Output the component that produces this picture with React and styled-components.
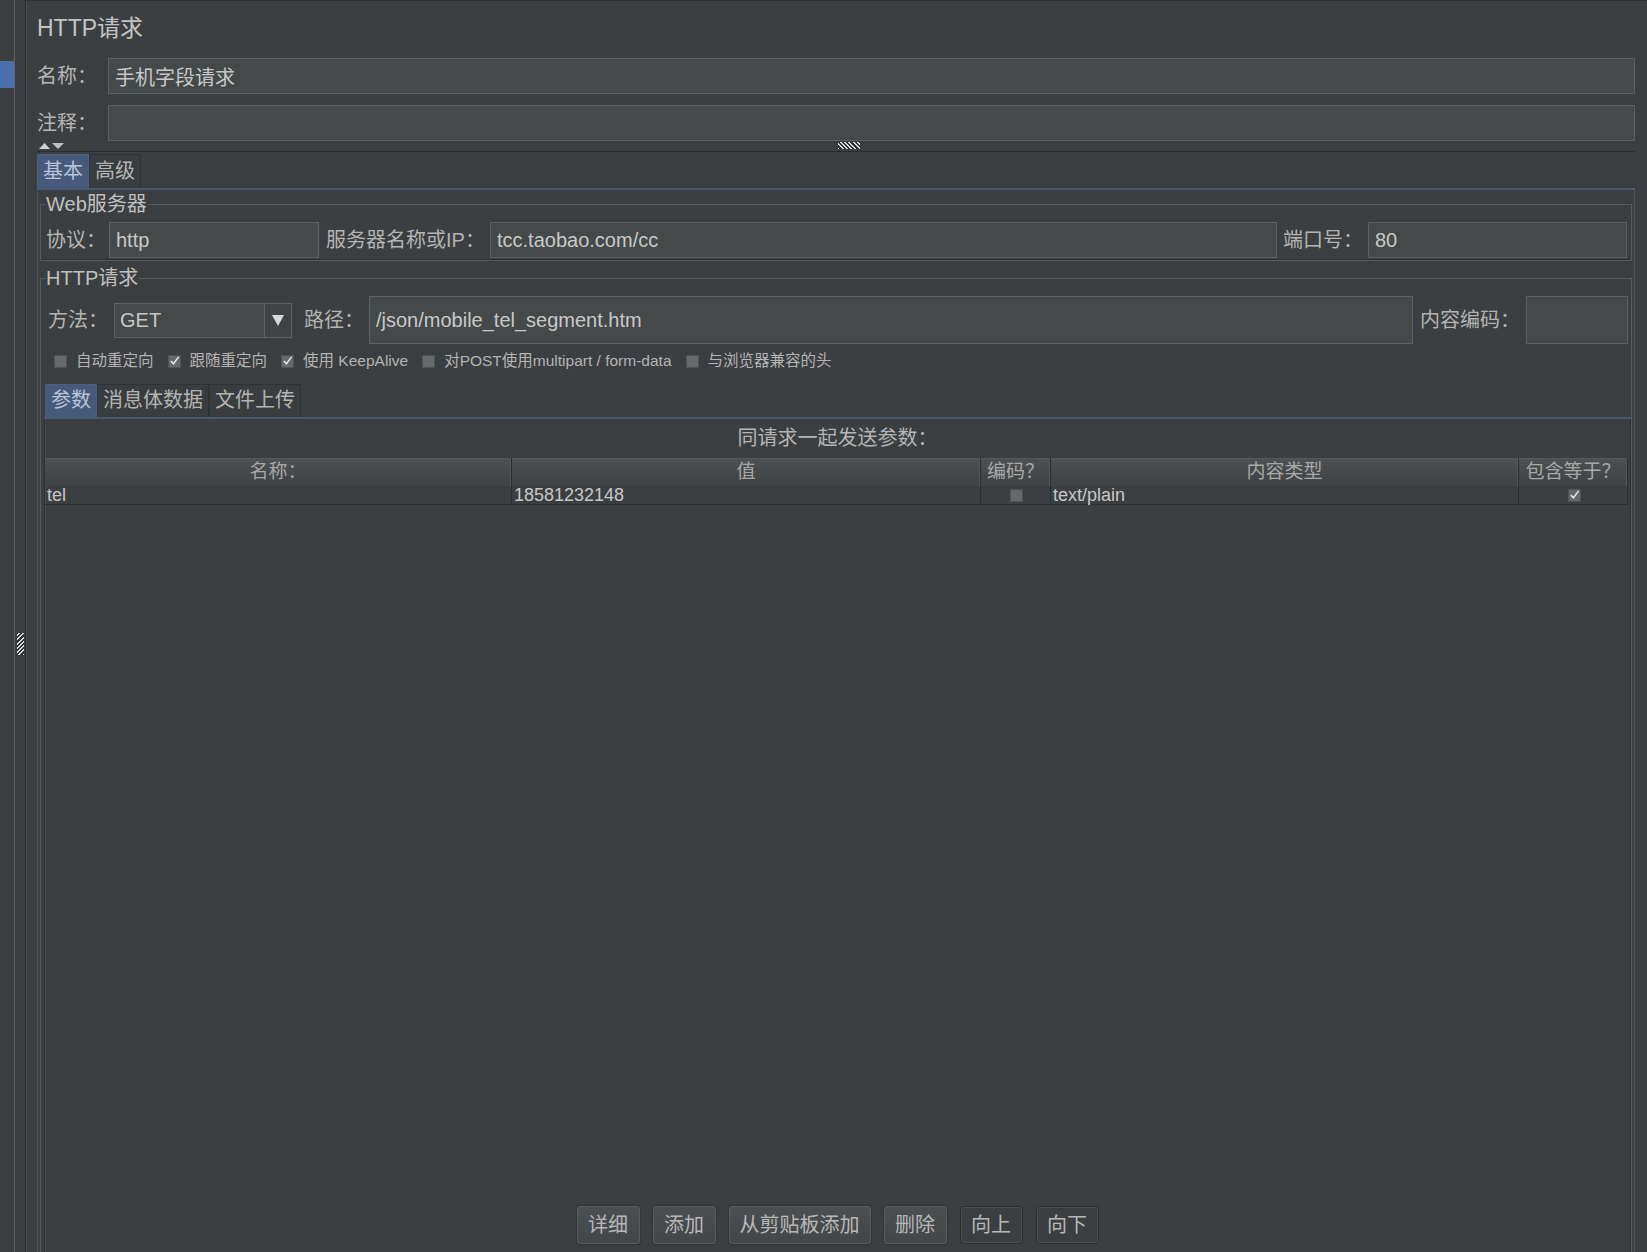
import React from "react";
import styled, { createGlobalStyle } from "styled-components";

const Global = createGlobalStyle`
  html, body { margin: 0; padding: 0; background: #3c3f41; }
  body {
    font-family: "Liberation Sans", "Noto Sans CJK SC", sans-serif;
    color: #bbbbbb;
  }
  * { box-sizing: border-box; }
`;

const Root = styled.div`
  display: flex;
  width: 1647px;
  height: 1252px;
  overflow: hidden;
  background: #3c3f41;
`;

const TreePane = styled.div`
  width: 15px;
  flex: none;
  padding-top: 61px;
  border-right: 1px solid #5e6264;
`;

const TreeSelection = styled.div`
  height: 27px;
  background: #4b6eaf;
`;

const SideSplitter = styled.div`
  width: 11px;
  flex: none;
  display: flex;
  justify-content: center;
  padding-top: 633px;
  border-right: 1px solid #2b2d2e;
`;

const Grip = styled.div`
  flex: none;
  width: ${(p) => p.$w}px;
  height: ${(p) => p.$h}px;
  margin-left: ${(p) => p.$ml || 0}px;
  background: repeating-linear-gradient(
    ${(p) => p.$angle || 45}deg,
    #d8d8d8 0 1.4px,
    #2e3032 1.4px 3px
  );
`;

const Main = styled.div`
  flex: 1;
  display: flex;
  flex-direction: column;
  min-width: 0;
  padding: 0 12px 0 11px;
  border-top: 1px solid #2f3133;
  box-shadow: inset 3px 0 0 -2px #4a4d4f;
`;

const Title = styled.div`
  font-size: 23px;
  line-height: 26px;
  padding-top: 14px;
  color: #c4c4c4;
`;

const FieldRow = styled.div`
  display: flex;
  align-items: center;
  margin-top: ${(p) => p.$mt}px;
`;

const FieldLabel = styled.div`
  flex: none;
  width: ${(p) => p.$w}px;
  margin-left: ${(p) => p.$ml || 0}px;
  font-size: 20px;
  line-height: 24px;
  white-space: nowrap;
  color: #b4b4b4;
`;

const TextInput = styled.input`
  flex: ${(p) => (p.$w ? "none" : "1")};
  width: ${(p) => (p.$w ? `${p.$w}px` : "auto")};
  min-width: 0;
  height: ${(p) => p.$h || 36}px;
  margin: 0;
  padding: 0 6px;
  background: #45494a;
  border: 1px solid #5e6163;
  border-radius: 0;
  color: #c8c8c8;
  font: 20px "Liberation Sans", "Noto Sans CJK SC", sans-serif;
  outline: none;
`;

const SplitBar = styled.div`
  display: flex;
  align-items: flex-start;
  height: 11px;
  padding-top: 1px;
  border-bottom: 1px solid #2a2c2e;
`;

const Arrows = styled.svg`
  flex: none;
  margin-left: 2px;
  width: 25px;
  height: 7px;
`;

const GripSlot = styled.div`
  flex: 1;
  display: flex;
  justify-content: center;
`;

const TabStrip = styled.div`
  display: flex;
  flex: none;
  margin-top: ${(p) => p.$mt || 0}px;
  margin-left: ${(p) => p.$ml || 0}px;
  padding-left: ${(p) => p.$pl || 0}px;
  border-bottom: 2px solid #4d5874;
`;

const Tab = styled.div`
  height: ${(p) => p.$h}px;
  padding: 0 5px;
  font-size: 20px;
  line-height: ${(p) => p.$h - 2}px;
  white-space: nowrap;
  background: ${(p) => (p.$active ? "#485a7c" : "#3a3d3f")};
  color: ${(p) => (p.$active ? "#b9c4da" : "#b4b4b4")};
  border: 1px solid ${(p) => (p.$active ? "#4d5f82" : "#2f3234")};
  border-bottom: none;
`;

const TabPanel = styled.div`
  flex: 1;
  display: flex;
  flex-direction: column;
  min-height: 0;
  border-left: 1px solid #4e5153;
  border-right: 1px solid #4e5153;
`;

const Group = styled.fieldset`
  display: flex;
  flex-direction: column;
  flex: ${(p) => (p.$grow ? "1" : "none")};
  min-width: 0;
  min-height: 0;
  margin: ${(p) => p.$mt}px 2px 0;
  padding: 0 0 ${(p) => (p.$grow ? 0 : 2)}px;
  border: 1px solid #595c5e;
  border-bottom: ${(p) => (p.$grow ? "none" : "1px solid #595c5e")};
  box-shadow: ${(p) => (p.$grow ? "none" : "inset 0 -1px 0 #2f3133")};
`;

const Legend = styled.legend`
  margin-left: 4px;
  padding: 0 1px;
  font-size: 20px;
  line-height: 20px;
  color: #c0c0c0;
`;

const Row = styled.div`
  display: flex;
  align-items: center;
  flex: none;
  height: ${(p) => p.$h}px;
  margin-top: ${(p) => p.$mt}px;
  padding: 0 ${(p) => p.$pr || 0}px 0 ${(p) => p.$pl || 0}px;
`;

const Combo = styled.div`
  flex: none;
  display: flex;
  width: 178px;
  height: 35px;
  background: #45494a;
  border: 1px solid #5e6163;
`;

const ComboValue = styled.div`
  flex: 1;
  padding-left: 5px;
  font-size: 20px;
  line-height: 33px;
  color: #c8c8c8;
`;

const ComboArrow = styled.div`
  flex: none;
  width: 27px;
  display: flex;
  align-items: center;
  justify-content: center;
  border-left: 1px solid #5e6163;
  background: #404345;
`;

const CheckRow = styled.div`
  display: flex;
  align-items: center;
  gap: 14px;
  height: 24px;
  margin-top: 5px;
  padding-left: 13px;
`;

const CheckItem = styled.div`
  display: flex;
  align-items: center;
  gap: 9px;
  font-size: 15.5px;
  line-height: 20px;
  color: #b4b4b4;
  white-space: nowrap;
`;

const Box = styled.span`
  flex: none;
  display: inline-flex;
  align-items: center;
  justify-content: center;
  width: 13px;
  height: 13px;
  background: #66696b;
  border: 1px solid #505355;
`;

const TablePanel = styled.div`
  flex: 1;
  display: flex;
  flex-direction: column;
  min-height: 0;
  margin-left: 3px;
  border-left: 1px solid #2d3032;
  border-right: 1px solid #2d3032;
  box-shadow: inset 1px 0 0 #4a4d4f;
`;

const Caption = styled.div`
  height: 39px;
  font-size: 20px;
  line-height: 39px;
  text-align: center;
  color: #b4b4b4;
`;

const Grid = styled.div`
  display: grid;
  grid-template-columns: 467px 469px 70px 468px 109px;
`;

const HeadCell = styled.div`
  height: 28px;
  font-size: 19px;
  line-height: 28px;
  text-align: center;
  color: #a8a8a8;
  white-space: nowrap;
  background: linear-gradient(#4e5254, #45484a 60%, #404345);
  border-right: 1px solid #2c2f31;
  box-shadow: inset -1px 0 0 #55595b, inset 0 1px 0 #55595b;
`;

const Cell = styled.div`
  display: flex;
  align-items: center;
  justify-content: ${(p) => (p.$center ? "center" : "flex-start")};
  height: 19px;
  padding-left: 2px;
  font-size: 18px;
  line-height: 19px;
  white-space: nowrap;
  color: #c8c8c8;
  border-right: 1px solid #2c2f31;
  border-bottom: 1px solid #2c2f31;
`;

const Spacer = styled.div`
  flex: 1;
`;

const ButtonBar = styled.div`
  display: flex;
  justify-content: center;
  gap: 13px;
  padding: 0 0 8px 0;
`;

const Button = styled.div`
  min-width: 63px;
  height: 38px;
  padding: 0 10px;
  font-size: 20px;
  line-height: 36px;
  text-align: center;
  white-space: nowrap;
  color: #b8b8b8;
  border-radius: 3px;
  border: 1px solid ${(p) => (p.$disabled ? "#2c2e30" : "#595c5f")};
  background: ${(p) =>
    p.$disabled ? "#3c3f41" : "linear-gradient(#4b4f51, #43474a)"};
  box-shadow: ${(p) =>
    p.$disabled ? "inset 0 0 0 1px #4a4d50" : "0 0 0 1px #333537"};
`;

const Check = ({ on }) => (
  <Box>
    {on && (
      <svg width="12" height="12" viewBox="0 0 12 12">
        <path d="M2 6 L4.8 9 L10.5 1.5" fill="none" stroke="#e6e6e6" strokeWidth="1.6" />
      </svg>
    )}
  </Box>
);

const checks = [
  { on: false, label: "自动重定向" },
  { on: true, label: "跟随重定向" },
  { on: true, label: "使用 KeepAlive" },
  { on: false, label: "对POST使用multipart / form-data" },
  { on: false, label: "与浏览器兼容的头" },
];

const buttons = [
  { t: "详细" },
  { t: "添加" },
  { t: "从剪贴板添加" },
  { t: "删除" },
  { t: "向上", d: true },
  { t: "向下", d: true },
];

export default function App() {
  return (
    <Root>
      <Global />
      <TreePane>
        <TreeSelection />
      </TreePane>
      <SideSplitter>
        <Grip $w={7} $h={22} $angle={-45} />
      </SideSplitter>
      <Main>
        <Title>HTTP请求</Title>
        <FieldRow $mt={17}>
          <FieldLabel $w={71}>名称：</FieldLabel>
          <TextInput readOnly value="手机字段请求" />
        </FieldRow>
        <FieldRow $mt={11}>
          <FieldLabel $w={71}>注释：</FieldLabel>
          <TextInput readOnly value="" />
        </FieldRow>
        <SplitBar>
          <Arrows viewBox="0 0 25 7">
            <path d="M0 7 L5.5 1 L11 7 Z" fill="#d0d0d0" />
            <path d="M13 1 L25 1 L19 7 Z" fill="#c0c0c0" />
          </Arrows>
          <GripSlot>
            <Grip $w={22} $h={7} $ml={-1} />
          </GripSlot>
        </SplitBar>
        <TabStrip $mt={2}>
          <Tab $h={34} $active>基本</Tab>
          <Tab $h={34}>高级</Tab>
        </TabStrip>
        <TabPanel>
          <Group $mt={4}>
            <Legend>Web服务器</Legend>
            <Row $h={36} $mt={8} $pl={5} $pr={4}>
              <FieldLabel $w={63}>协议：</FieldLabel>
              <TextInput readOnly value="http" $w={210} />
              <FieldLabel $w={164} $ml={7}>服务器名称或IP：</FieldLabel>
              <TextInput readOnly value="tcc.taobao.com/cc" />
              <FieldLabel $w={85} $ml={6}>端口号：</FieldLabel>
              <TextInput readOnly value="80" $w={259} />
            </Row>
          </Group>
          <Group $mt={7} $grow>
            <Legend>HTTP请求</Legend>
            <Row $h={48} $mt={8} $pl={7} $pr={3}>
              <FieldLabel $w={66}>方法：</FieldLabel>
              <Combo>
                <ComboValue>GET</ComboValue>
                <ComboArrow>
                  <svg width="12" height="11" viewBox="0 0 12 11">
                    <path d="M0 0 H12 L6 11 Z" fill="#d8d8d8" />
                  </svg>
                </ComboArrow>
              </Combo>
              <FieldLabel $w={65} $ml={12}>路径：</FieldLabel>
              <TextInput readOnly value="/json/mobile_tel_segment.htm" $h={48} />
              <FieldLabel $w={106} $ml={7}>内容编码：</FieldLabel>
              <TextInput readOnly value="" $w={102} $h={48} />
            </Row>
            <CheckRow>
              {checks.map((c) => (
                <CheckItem key={c.label}>
                  <Check on={c.on} />
                  {c.label}
                </CheckItem>
              ))}
            </CheckRow>
            <TabStrip $mt={11} $ml={3} $pl={1}>
              <Tab $h={33} $active>参数</Tab>
              <Tab $h={33}>消息体数据</Tab>
              <Tab $h={33}>文件上传</Tab>
            </TabStrip>
            <TablePanel>
              <Caption>同请求一起发送参数：</Caption>
              <Grid>
                <HeadCell>名称：</HeadCell>
                <HeadCell>值</HeadCell>
                <HeadCell>编码？</HeadCell>
                <HeadCell>内容类型</HeadCell>
                <HeadCell>包含等于？</HeadCell>
                <Cell>tel</Cell>
                <Cell>18581232148</Cell>
                <Cell $center>
                  <Check on={false} />
                </Cell>
                <Cell>text/plain</Cell>
                <Cell $center>
                  <Check on />
                </Cell>
              </Grid>
              <Spacer />
              <ButtonBar>
                {buttons.map((b) => (
                  <Button key={b.t} $disabled={b.d}>
                    {b.t}
                  </Button>
                ))}
              </ButtonBar>
            </TablePanel>
          </Group>
        </TabPanel>
      </Main>
    </Root>
  );
}
